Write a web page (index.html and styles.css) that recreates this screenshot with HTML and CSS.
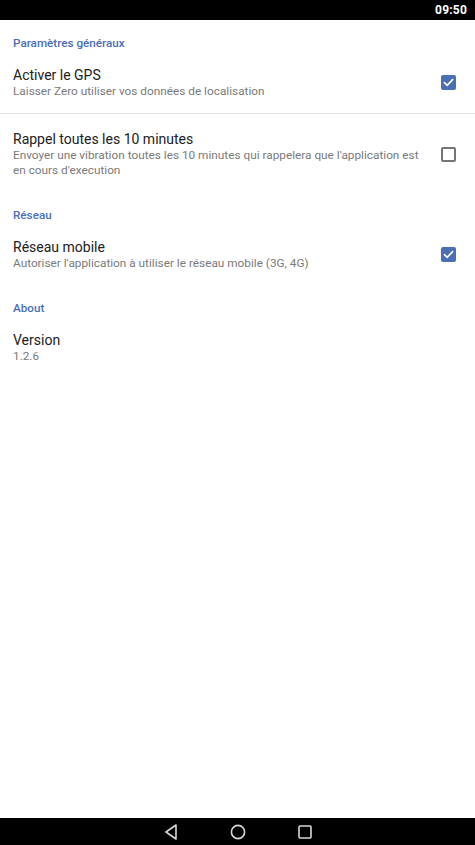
FILE: index.html
```html
<!DOCTYPE html>
<html lang="fr">
<head>
<meta charset="utf-8">
<title>Paramètres</title>
<link rel="stylesheet" href="styles.css">
</head>
<body>
<div class="screen">
  <div class="status-bar"><span class="time">09:50</span></div>
  <main class="prefs">
    <div class="category">Paramètres généraux</div>
    <div class="item">
      <div class="texts">
        <div class="title">Activer le GPS</div>
        <div class="summary">Laisser Zero utiliser vos données de localisation</div>
      </div>
      <div class="widget"><span class="checkbox checked"><svg viewBox="0 0 15 15" width="15" height="15"><path d="M3.6 7.8 L6.2 10.3 L11.5 4.8" fill="none" stroke="#fff" stroke-width="1.7" stroke-linecap="square"/></svg></span></div>
    </div>
    <div class="divider"></div>
    <div class="item">
      <div class="texts">
        <div class="title">Rappel toutes les 10 minutes</div>
        <div class="summary">Envoyer une vibration toutes les 10 minutes qui rappelera que l'application est en cours d'execution</div>
      </div>
      <div class="widget"><span class="checkbox"></span></div>
    </div>
    <div class="category">Réseau</div>
    <div class="item">
      <div class="texts">
        <div class="title">Réseau mobile</div>
        <div class="summary">Autoriser l'application à utiliser le réseau mobile (3G, 4G)</div>
      </div>
      <div class="widget"><span class="checkbox checked"><svg viewBox="0 0 15 15" width="15" height="15"><path d="M3.6 7.8 L6.2 10.3 L11.5 4.8" fill="none" stroke="#fff" stroke-width="1.7" stroke-linecap="square"/></svg></span></div>
    </div>
    <div class="category">About</div>
    <div class="item">
      <div class="texts">
        <div class="title">Version</div>
        <div class="summary">1.2.6</div>
      </div>
    </div>
  </main>
  <nav class="nav-bar">
    <svg class="nav-icon" width="16" height="18" viewBox="0 0 16 18"><path d="M13 2 L3 9 L13 16 Z" fill="none" stroke="#d8d8d8" stroke-width="1.6" stroke-linejoin="round"/></svg>
    <svg class="nav-icon" width="18" height="18" viewBox="0 0 18 18"><circle cx="9" cy="9" r="6.6" fill="none" stroke="#d8d8d8" stroke-width="1.6"/></svg>
    <svg class="nav-icon" width="16" height="18" viewBox="0 0 16 18"><rect x="2" y="3" width="12" height="12" rx="1" fill="none" stroke="#d8d8d8" stroke-width="1.6"/></svg>
  </nav>
</div>
</body>
</html>
```
FILE: styles.css
```css
html, body {
  margin: 0;
  padding: 0;
  background: #fff;
}
body {
  font-family: Roboto, "Noto Sans", "Liberation Sans", sans-serif;
}
.screen {
  width: 475px;
  height: 845px;
  display: flex;
  flex-direction: column;
  overflow: hidden;
}
.status-bar {
  height: 20px;
  background: #000;
  display: flex;
  align-items: center;
  justify-content: flex-end;
  padding-right: 8px;
}
.time {
  color: #fff;
  font-size: 12px;
  font-weight: 700;
  letter-spacing: 0.2px;
}
.prefs {
  flex: 1;
}
.category {
  padding: 15px 13px 0;
  line-height: 16px;
  font-size: 11.7px;
  font-weight: 500;
  color: #4a6fb5;
}
.item {
  display: flex;
  align-items: center;
  padding: 16px 0 14.5px 13px;
}
.texts {
  flex: 1;
  min-width: 0;
}
.title {
  font-size: 14px;
  line-height: 17px;
  color: #212121;
}
.summary {
  font-size: 11.8px;
  line-height: 14.5px;
  color: #7a7a7a;
}
.widget {
  width: 15px;
  padding-left: 14px;
  padding-right: 19px;
  display: flex;
  justify-content: flex-end;
}
.checkbox {
  box-sizing: border-box;
  width: 15px;
  height: 15px;
  border: 2px solid #757575;
  border-radius: 2px;
  display: block;
}
.checkbox.checked {
  border: none;
  background: #4a6fb5;
}
.checkbox svg {
  display: block;
}
.divider {
  height: 1px;
  margin-bottom: 1px;
  background: #e3e3e3;
}
.nav-bar {
  height: 27px;
  background: #000;
  display: flex;
  align-items: center;
  justify-content: center;
  gap: 50px;
}
.nav-icon {
  display: block;
}
```
